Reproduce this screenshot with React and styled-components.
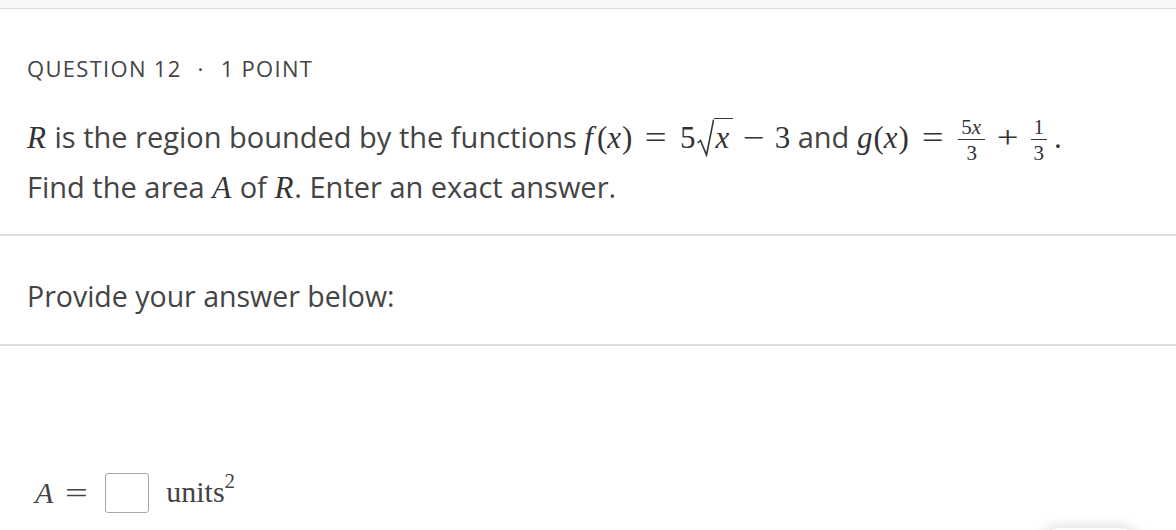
import styled, { createGlobalStyle } from "styled-components";

const GlobalStyle = createGlobalStyle`
  html, body {
    margin: 0;
    padding: 0;
    background: #fff;
  }
  body {
    font-family: "Open Sans", "Noto Sans", sans-serif;
    color: #444;
    overflow: hidden;
  }
`;

function Frac({ top, bottom }) {
  return (
    <FracBox>
      <FracTop>{top}</FracTop>
      <FracBottom>{bottom}</FracBottom>
    </FracBox>
  );
}

function Sqrt({ children }) {
  return (
    <>
      <RadicalSign width="17" height="38" viewBox="0 0 17 38">
        <path
          d="M0.5 24 L3.5 21.5 L9.5 36 L16.5 1.2 L17 1.2"
          fill="none"
          stroke="#333"
          strokeWidth="1.6"
          strokeLinejoin="miter"
        />
      </RadicalSign>
      <Radicand>{children}</Radicand>
    </>
  );
}

export default function App() {
  return (
    <>
      <GlobalStyle />
      <Page>
        <TopBar />
        <QuestionSection>
          <Label>
            Question 12 <Dot>·</Dot> 1 point
          </Label>
          <Prompt>
            <Line>
              <MathVar>R</MathVar> is the region bounded by the functions{" "}
              <Math>
                <MathVar $pad={4}>f</MathVar>(<MathVar>x</MathVar>)
                <Op $gap={15}>=</Op>5
                <Sqrt>
                  <MathVar>x</MathVar>
                </Sqrt>
                <Op $gap={12}>−</Op>3
              </Math>{" "}
              and{" "}
              <Math>
                <MathVar>g</MathVar>(<MathVar>x</MathVar>)<Op $gap={15}>=</Op>
                <Frac
                  top={
                    <>
                      5<MathVar>x</MathVar>
                    </>
                  }
                  bottom="3"
                />
                <Op $gap={12}>+</Op>
                <Frac top="1" bottom="3" />
                <Period>.</Period>
              </Math>
            </Line>
            <Line>
              Find the area <MathVar>A</MathVar> of <MathVar>R</MathVar>. Enter
              an exact answer.
            </Line>
          </Prompt>
        </QuestionSection>
        <Divider />
        <InstructionSection>Provide your answer below:</InstructionSection>
        <Divider />
        <AnswerSection>
          <AnswerRow>
            <MathVar>A</MathVar>
            <Equals>=</Equals>
            <AnswerInput aria-label="answer" />
            <Units>
              units<sup>2</sup>
            </Units>
          </AnswerRow>
        </AnswerSection>
        <FloatingButton aria-hidden="true" />
      </Page>
    </>
  );
}

/* ------- Styled Components ------- */

const Page = styled.div`
  position: relative;
  width: 1176px;
  height: 530px;
  overflow: hidden;
`;

const TopBar = styled.div`
  height: 8px;
  background: #f7f7f7;
  border-bottom: 1px solid #dedede;
`;

const QuestionSection = styled.section`
  padding: 44px 27px 22px;
`;

const Label = styled.div`
  font-size: 22px;
  letter-spacing: 1.3px;
  text-transform: uppercase;
  line-height: 30px;
  color: #444;
  white-space: nowrap;
`;

const Dot = styled.span`
  margin: 0 9px;
`;

const Prompt = styled.div`
  margin-top: 29px;
  font-size: 29px;
  line-height: 50px;
`;

const Line = styled.div`
  white-space: nowrap;
  height: 50px;
`;

const Math = styled.span`
  font-family: "Liberation Serif", "Times New Roman", serif;
  font-size: 31px;
  color: #333;
`;

const MathVar = styled.i`
  font-family: "Liberation Serif", "Times New Roman", serif;
  font-style: italic;
  font-size: 31px;
  color: #333;
  padding-right: ${({ $pad }) => $pad ?? 1}px;
`;

const Op = styled.span`
  font-family: "Liberation Serif", "Times New Roman", serif;
  display: inline-block;
  transform: scaleX(1.25);
  margin: 0 ${({ $gap }) => $gap ?? 11}px;
`;

const RadicalSign = styled.svg`
  vertical-align: -9px;
  margin-left: 2px;
`;

const Radicand = styled.span`
  display: inline-block;
  border-top: 1.6px solid #333;
  padding: 4px 3px 0 1px;
  line-height: 29px;
`;

const FracBox = styled.span`
  display: inline-flex;
  flex-direction: column;
  align-items: stretch;
  text-align: center;
  vertical-align: 14px;
  font-size: 21px;
  line-height: 18px;
  margin: 0 2px;

  i {
    font-size: 21px;
  }
`;

const FracTop = styled.span`
  border-bottom: 1.4px solid #333;
  padding: 0 3px 3px;
`;

const FracBottom = styled.span`
  padding-top: 4px;
`;

const Period = styled.span`
  margin-left: 5px;
`;

const Divider = styled.hr`
  margin: 0;
  border: none;
  border-top: 2px solid #dedede;
`;

const InstructionSection = styled.section`
  box-sizing: border-box;
  height: 108px;
  padding: 40px 27px 0;
  font-size: 28.5px;
  line-height: 40px;
  color: #444;
  white-space: nowrap;
`;

const AnswerSection = styled.section`
  padding: 127px 35px 0;
`;

const AnswerRow = styled.div`
  display: flex;
  align-items: center;
  height: 40px;
  font-family: "Liberation Serif", "Times New Roman", serif;
  font-size: 30px;
  color: #444;

  i {
    font-size: 30px;
    color: #444;
  }
`;

const Equals = styled.span`
  display: inline-block;
  transform: scaleX(1.35);
  margin: 0 20px 0 14px;
`;

const AnswerInput = styled.span`
  display: inline-block;
  box-sizing: border-box;
  width: 44px;
  height: 40px;
  border: 1px solid #a6a6a6;
  border-radius: 3px;
  background: #fff;
  margin-right: 17px;
`;

const Units = styled.span`
  transform: translateY(-1px);

  sup {
    font-size: 21px;
    vertical-align: 14px;
    line-height: 0;
  }
`;

const FloatingButton = styled.div`
  position: absolute;
  left: 1040px;
  top: 528px;
  width: 100px;
  height: 40px;
  border-radius: 20px;
  background: #fff;
  box-shadow: 0 0 14px rgba(0, 0, 0, 0.18);
`;
